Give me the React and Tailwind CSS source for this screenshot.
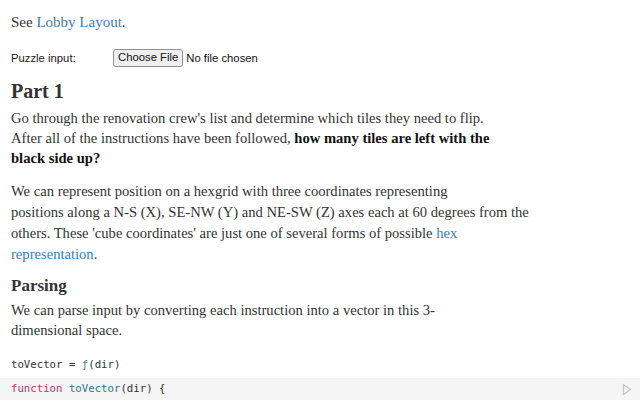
import React from "react";

export default function App() {
  return (
    <div className="w-[640px] h-[400px] overflow-hidden bg-white text-[#333]">
      <div className="px-[11px] font-['Liberation_Serif',serif]">
        <p className="pt-[12px] text-[15px] leading-[21px]">
          See <a className="text-[#3b7fb6]">Lobby Layout</a>.
        </p>
        <div className="mt-[15px] flex items-center h-[20px] font-['Liberation_Sans',sans-serif] text-[11.3px] text-[#222]">
          <span className="w-[102px]">Puzzle input:</span>
          <button className="h-[18px] px-[4px] border border-[#8f8f8f] rounded-[3px] bg-[#efefef] text-[11.3px] text-[#111] leading-none">Choose File</button>
          <span className="ml-[3px] text-[11.3px] text-[#111]">No file chosen</span>
        </div>
        <h2 className="mt-[10px] text-[20px] leading-[26px] font-bold text-[#333]">Part 1</h2>
        <p className="mt-[4px] text-[14.6px] leading-[20px] whitespace-nowrap">
          Go through the renovation crew's list and determine which tiles they need to flip.
          <br />
          After all of the instructions have been followed, <b className="text-[#111]">how many tiles are left with the</b>
          <br />
          <b className="text-[#111]">black side up?</b>
        </p>
        <p className="mt-[13px] text-[14.6px] leading-[21px] whitespace-nowrap">
          We can represent position on a hexgrid with three coordinates representing
          <br />
          positions along a N-S (X), SE-NW (Y) and NE-SW (Z) axes each at 60 degrees from the
          <br />
          others. These 'cube coordinates' are just one of several forms of possible <a className="text-[#3b7fb6]">hex</a>
          <br />
          <a className="text-[#3b7fb6]">representation</a>.
        </p>
        <h3 className="mt-[10px] text-[17px] leading-[22px] font-bold">Parsing</h3>
        <p className="mt-[3px] text-[14.6px] leading-[20px] whitespace-nowrap">
          We can parse input by converting each instruction into a vector in this 3-
          <br />
          dimensional space.
        </p>
      </div>
      <div className="mt-[14px] px-[11px] h-[22px] flex items-center whitespace-pre font-['DejaVu_Sans_Mono',monospace] text-[10.7px] text-[#333]">
        {"toVector = "}<span className="text-[#3b7fb6]">ƒ</span>(dir)
      </div>
      <div className="relative mt-[2px] h-[23px] overflow-hidden bg-[#f5f5f5] px-[11px] pt-[2px] whitespace-pre font-['DejaVu_Sans_Mono',monospace] text-[10.7px] leading-[17px] text-[#333]">
        <div>
          <span className="text-[#c2336f]">function</span> <span className="text-[#2f7791]">toVector</span>(dir) {"{"}
        </div>
        <svg className="absolute right-[8px] top-[5px]" width="10" height="13" viewBox="0 0 10 13">
          <path d="M1.5 1.5 L8.5 6.5 L1.5 11.5 Z" fill="none" stroke="#c8c8c8" strokeWidth="1.4" strokeLinejoin="round" />
        </svg>
      </div>
    </div>
  );
}
